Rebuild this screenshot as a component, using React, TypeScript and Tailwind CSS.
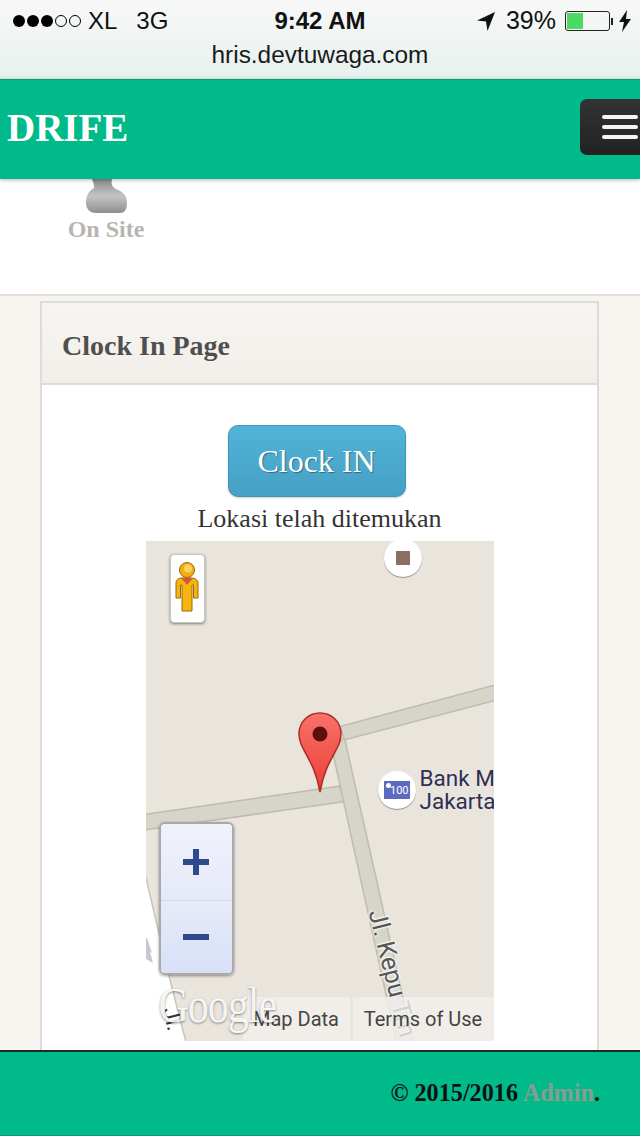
const serif = "font-['Liberation_Serif',serif]";

function StatusBar() {
  return (
    <div className="relative h-[40px] font-['Liberation_Sans',sans-serif] text-[24px] text-[#111] flex items-center pt-[2px]">
      <div className="flex items-center gap-[2px] pl-[13px]">
        <span className="w-[12px] h-[12px] rounded-full bg-black" />
        <span className="w-[12px] h-[12px] rounded-full bg-black" />
        <span className="w-[12px] h-[12px] rounded-full bg-black" />
        <span className="w-[12px] h-[12px] rounded-full border border-black" />
        <span className="w-[12px] h-[12px] rounded-full border border-black" />
      </div>
      <span className="ml-[7px]">XL</span>
      <span className="ml-[19px]">3G</span>
      <span className="absolute left-0 right-0 text-center font-bold">9:42 AM</span>
      <div className="ml-auto flex items-center pr-[9px]">
        <svg width="18" height="20" viewBox="0 0 18 20" className="mr-[11px]">
          <path d="M18 1 L0 9.5 L9 10.5 L10.5 20 Z" fill="#111" />
        </svg>
        <span className="text-[25px]">39%</span>
        <div className="ml-[9px] w-[45px] h-[20px] rounded-[3px] border border-[#222] p-[1px]">
          <div className="w-[16px] h-full bg-[#4cd964]" />
        </div>
        <span className="ml-[1px] w-[2px] h-[7px] bg-[#222]" />
        <svg width="12" height="22" viewBox="0 0 12 22" className="ml-[6px]">
          <path d="M8 0 L0 12 L5 12 L3 22 L12 9 L7 9 Z" fill="#111" />
        </svg>
      </div>
    </div>
  );
}

function BrowserBar() {
  return (
    <div className="h-[79px] shrink-0 bg-gradient-to-b from-[#f8f8f8] to-[#e6f1ee]">
      <StatusBar />
      <div className="text-center font-['Liberation_Sans',sans-serif] text-[24.4px] leading-[30px] text-[#1a1a1a]">
        hris.devtuwaga.com
      </div>
    </div>
  );
}

function Navbar() {
  return (
    <div className="relative z-10 h-[100px] shrink-0 bg-[#00ba8a] border-t border-[#079a75] shadow-[0_1px_4px_rgba(0,0,0,0.3)] flex items-center justify-between">
      <span className={`${serif} pl-[7px] text-[39px] font-bold text-white -mt-[3px]`}>DRIFE</span>
      <div className="w-[60px] h-[56px] -mt-[6px] rounded-l-[7px] bg-gradient-to-b from-[#333] to-[#222] flex flex-col gap-[6px] pl-[22px] justify-center">
        <span className="w-[36px] h-[4px] rounded-[2px] bg-[#f5f5f5]" />
        <span className="w-[36px] h-[4px] rounded-[2px] bg-[#f5f5f5]" />
        <span className="w-[36px] h-[4px] rounded-[2px] bg-[#f5f5f5]" />
      </div>
    </div>
  );
}

function PersonIcon() {
  return (
    <svg width="41" height="35" viewBox="0 0 41 35">
      <defs>
        <linearGradient id="person" x1="0" y1="0" x2="0" y2="1">
          <stop offset="0" stopColor="#8a8a8a" />
          <stop offset="0.5" stopColor="#c4c4c4" />
          <stop offset="1" stopColor="#8f8f8f" />
        </linearGradient>
      </defs>
      <path
        d="M6 0 H26 C25 5 26 8 30 10 C37 13 41 16 41 24 C41 30 39 34 34 34 H10 C4 34 0 30 0 24 C0 16 3 12 8 9 C8 5 7 3 6 0 Z"
        fill="url(#person)"
      />
    </svg>
  );
}

function OnSite() {
  return (
    <div className="h-[117px] shrink-0 bg-white border-b-2 border-[#e2e0dd] pl-[68px]">
      <div className="w-[76px] flex flex-col items-center">
        <PersonIcon />
        <span className={`${serif} text-[24px] leading-[30px] font-bold text-[#b7b5b2] whitespace-nowrap`}>On Site</span>
      </div>
    </div>
  );
}

function Peg() {
  return (
    <div className="absolute left-[24px] top-[13px] w-[35px] h-[69px] bg-white rounded-[4px] border border-[#c8c6c0] shadow-[0_1px_3px_rgba(0,0,0,0.45)] flex items-center justify-center">
      <svg width="24" height="50" viewBox="0 0 24 50" className="-mt-[3px]">
        <path d="M1 21 C1 18 3 16 7 16 L16 16 C20 16 23 18 23 21 L23 36 L18.5 36 L18.5 23 L17 23 L17 49 L7 49 L7 23 L5.5 23 L5.5 36 L1 36 Z" fill="#f5b50f" stroke="#9a6a08" strokeWidth="1" />
        <path d="M6 16 H18 L12 23 Z" fill="#d9553c" />
        <circle cx="12" cy="8" r="7.5" fill="#f4ae12" stroke="#9a6a08" strokeWidth="1" />
        <circle cx="13" cy="6.5" r="4" fill="#fbd35a" />
      </svg>
    </div>
  );
}

const roadPaths = [
  "M195 186 L348 145 L348 159 L199 198 Z",
  "M0 274 L193 246 L197 260 L0 288 Z",
  "M187 209 L198 198 L266 500 L251 500 Z",
];

function Roads() {
  return (
    <svg width="348" height="500" viewBox="0 0 348 500" className="absolute left-0 top-0">
      {/* casing first, then fill, so the junctions join up */}
      {roadPaths.map((d) => (
        <path key={d} d={d} fill="#bfbcae" stroke="#bfbcae" strokeWidth="3" />
      ))}
      {roadPaths.map((d) => (
        <path key={d + "f"} d={d} fill="#d6d5ca" />
      ))}
      <path d="M-5 337 L0 337 L24 439 L41 505 L-5 505 Z" fill="#fff" stroke="#c9c5b8" strokeWidth="1.5" />
      <path d="M0 397 L1 397 L6 412 L4 411 L7 422 L0 418 Z" fill="#c3c7d6" />
    </svg>
  );
}

function Pin() {
  return (
    <svg width="46" height="82" viewBox="0 0 46 82" className="absolute left-[151px] top-[171px]">
      <defs>
        <linearGradient id="pin" x1="0" y1="0" x2="0" y2="1">
          <stop offset="0" stopColor="#f9726a" />
          <stop offset="1" stopColor="#ea3d33" />
        </linearGradient>
      </defs>
      <path
        d="M23 1 C11 1 2 10 2 22 C2 38 17 46 23 80 C29 46 44 38 44 22 C44 10 35 1 23 1 Z"
        fill="url(#pin)"
        stroke="#a92e28"
        strokeWidth="1.5"
      />
      <circle cx="23" cy="22" r="7.5" fill="#5e0f0c" />
    </svg>
  );
}

function MapLabels() {
  return (
    <>
      <span className="absolute left-[243px] top-[366px] origin-top-left rotate-[76deg] whitespace-nowrap text-[25px] leading-none text-[#555] [text-shadow:0_0_3px_#fff,0_0_3px_#fff,0_0_3px_#fff]">
        Jl. Kepu Tm
      </span>
      <span className="absolute left-[34px] top-[464px] origin-top-left rotate-[76deg] whitespace-nowrap text-[22px] leading-none text-[#333]">
        Jl.
      </span>
    </>
  );
}

function ZoomControl() {
  return (
    <div className="absolute left-[13px] top-[281px] w-[75px] h-[153px] rounded-[6px] border-2 border-[#a9a9a9] shadow-[0_1px_3px_rgba(0,0,0,0.4)] overflow-hidden flex flex-col">
      <div className="h-[77px] bg-gradient-to-b from-[#f0f2fb] to-[#e6e9f7] border-b border-[#d0d5ea] flex items-center justify-center">
        <svg width="28" height="28" viewBox="0 0 28 28">
          <path d="M11 1 H17 V11 H27 V17 H17 V27 H11 V17 H1 V11 H11 Z" fill="#2f4a8c" />
        </svg>
      </div>
      <div className="flex-1 bg-gradient-to-b from-[#e8ebf8] to-[#d8e0f8] flex items-center justify-center">
        <svg width="28" height="8" viewBox="0 0 28 8">
          <rect x="1" y="1" width="26" height="6" fill="#2f4a8c" />
        </svg>
      </div>
    </div>
  );
}

function MapPanel() {
  return (
    <div className="relative w-[348px] h-[500px] mx-auto bg-[#e9e5dd] overflow-hidden font-['Roboto',sans-serif]">
      <Roads />
      <MapLabels />
      <Peg />
      {/* stop marker */}
      <div className="absolute left-[238px] top-[-2px] w-[38px] h-[38px] rounded-full bg-white shadow-[0_1px_1px_rgba(0,0,0,0.35)] flex items-center justify-center">
        <span className="w-[14px] h-[14px] bg-[#8d6e63]" />
      </div>
      {/* bank poi */}
      <div className="absolute left-[232px] top-[230px] w-[38px] h-[38px] rounded-full bg-white shadow-[0_1px_1px_rgba(0,0,0,0.35)] flex items-center justify-center">
        <div className="relative w-[26px] h-[18px] bg-[#5c6bc0] text-[11px] leading-[20px] text-white text-right pr-[1px]">
          100
          <span className="absolute left-[2px] top-[2px] w-[5px] h-[5px] rounded-full bg-white" />
        </div>
      </div>
      <div className="absolute left-[274px] top-[226px] text-[22.5px] leading-[23px] text-[#2f2f55] whitespace-nowrap">
        Bank M
        <br />
        Jakarta
      </div>
      <Pin />
      <ZoomControl />
      {/* attribution */}
      <div className="absolute left-[97px] right-0 bottom-0 h-[44px] flex gap-[3px] text-[20px] text-[#444]">
        <div className="w-[107px] bg-[#f2f0ed]/80 flex items-center justify-center">Map Data</div>
        <div className="flex-1 bg-[#f2f0ed]/80 flex items-center justify-center">Terms of Use</div>
      </div>
      <span className={`${serif} absolute left-[13px] bottom-[5px] origin-bottom scale-y-[1.2] text-[42px] leading-[52px] text-white/90 [text-shadow:0_1px_2px_rgba(0,0,0,0.45)] tracking-[-1px]`}>
        Google
      </span>
    </div>
  );
}

function ClockCard() {
  return (
    <div className="w-[559px] border-2 border-[#dcdcdc] bg-white pb-[20px]">
      <div className="h-[82px] bg-gradient-to-b from-[#f7f5f1] to-[#f2efea] border-b-2 border-[#dcdcdc] flex items-center pl-[20px]">
        <h2 className={`${serif} text-[28px] font-bold text-[#4f4f4f] mt-[6px]`}>Clock In Page</h2>
      </div>
      <div className="pt-[40px] flex flex-col items-center">
        <button className={`${serif} -ml-[6px] w-[178px] h-[72px] rounded-[10px] border border-[#4195b8] bg-gradient-to-b from-[#50b4d8] to-[#479fc4] text-[32px] text-white [text-shadow:1px_1px_1px_rgba(0,0,0,0.35)] shadow-[0_1px_2px_rgba(0,0,0,0.2)]`}>
          Clock IN
        </button>
        <p className={`${serif} mt-[6px] h-[38px] text-[26px] leading-[32px] text-[#333]`}>Lokasi telah ditemukan</p>
        <MapPanel />
      </div>
    </div>
  );
}

function Footer() {
  return (
    <div className="h-[86px] shrink-0 bg-[#00ba8a] border-t-2 border-[#1f2b28] border-b border-b-[#079a75] flex items-center justify-end pr-[40px]">
      <p className={`${serif} text-[24.2px] font-bold text-[#111] -mt-[1px]`}>
        © 2015/2016 <span className="text-[#8a9c92]">Admin</span>.
      </p>
    </div>
  );
}

export default function App() {
  return (
    <div className="w-[640px] h-[1136px] overflow-hidden flex flex-col bg-[#f8f5f0]">
      <BrowserBar />
      <Navbar />
      <OnSite />
      <div className="flex-1 min-h-0 overflow-hidden pl-[40px] pt-[5px]">
        <ClockCard />
      </div>
      <Footer />
    </div>
  );
}
